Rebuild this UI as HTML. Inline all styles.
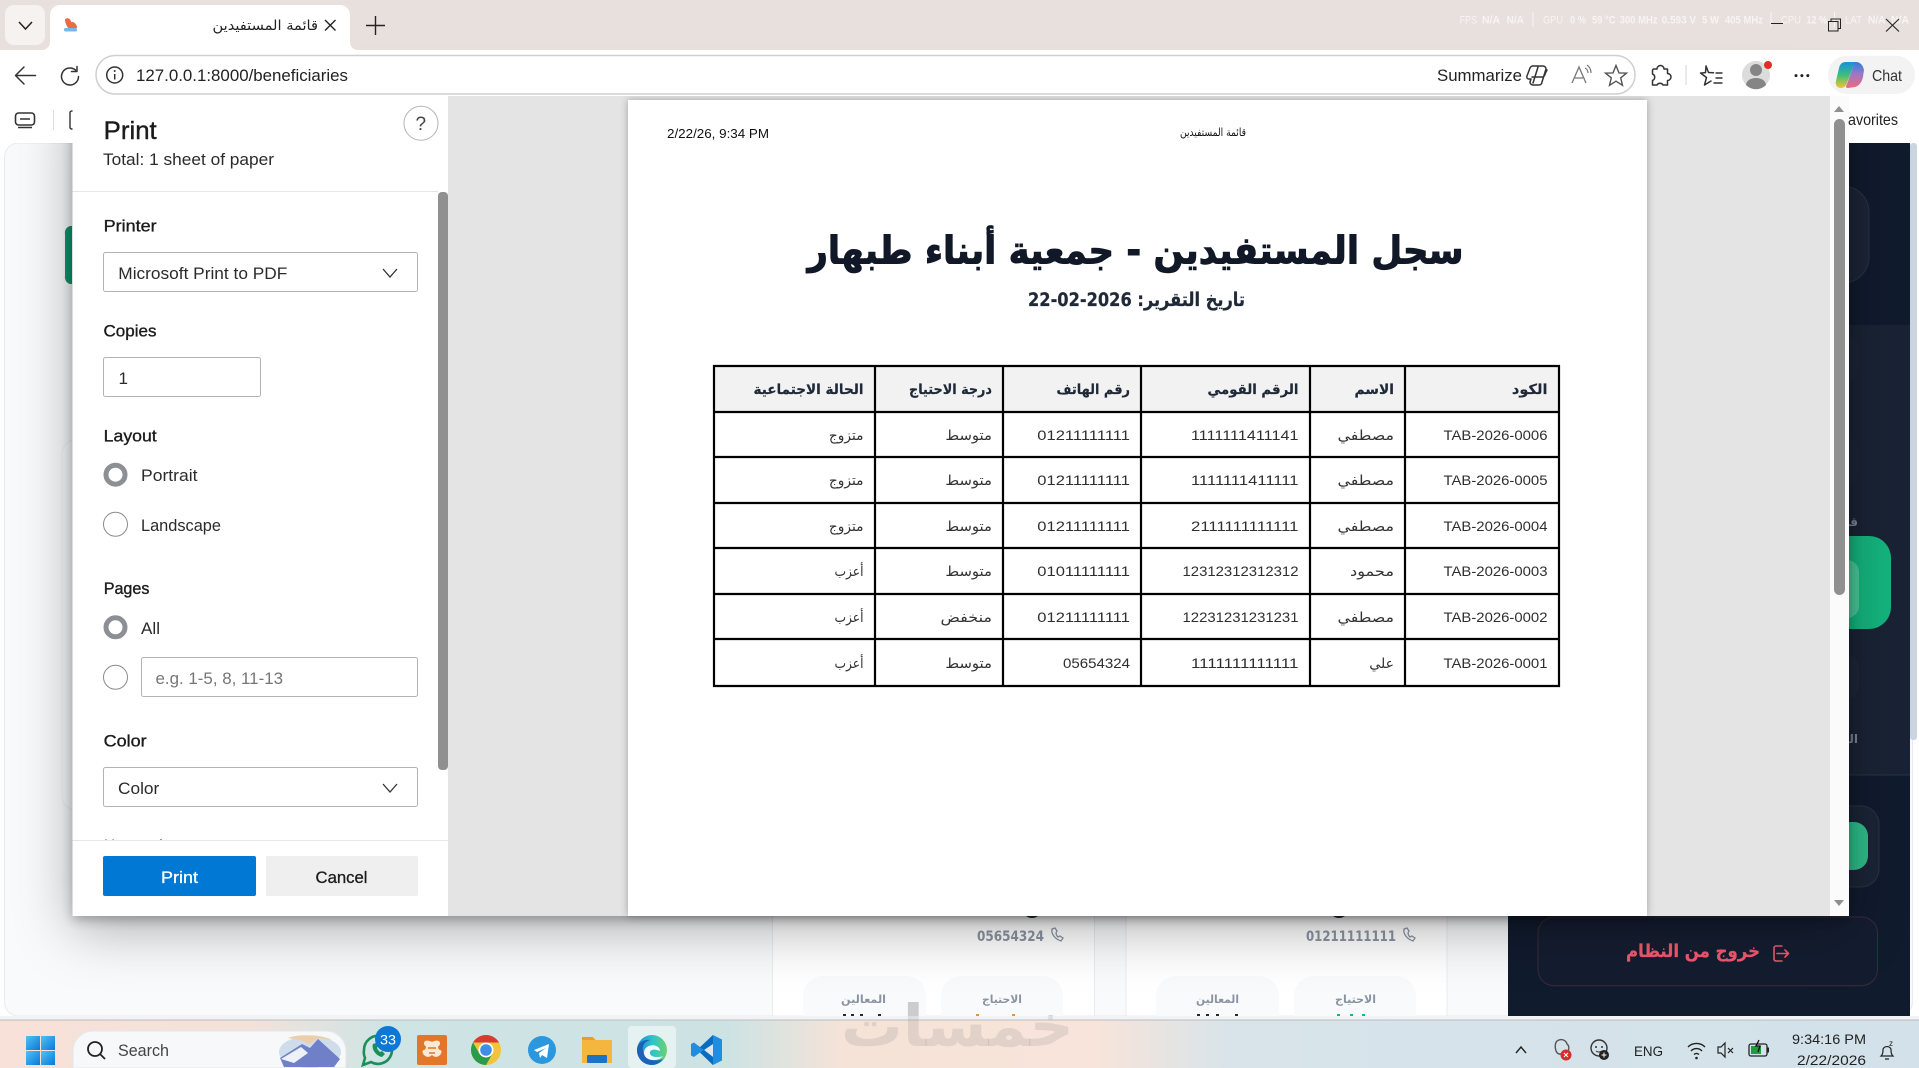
<!DOCTYPE html>
<html lang="en"><head><meta charset="utf-8"><title>قائمة المستفيدين</title>
<style>
html,body{margin:0;padding:0;width:1919px;height:1068px;overflow:hidden;background:#fff}
svg{display:block}
text{font-family:"Liberation Sans",sans-serif;fill:#222}
.ar{font-family:"DejaVu Sans",sans-serif;direction:rtl;text-anchor:start}
.lb{font-size:17px;fill:#1b1b1b;stroke:#1b1b1b;stroke-width:.35px}
.t{font-size:17px;fill:#2b2b2b}
.hw{font-size:11px;fill:#f7f4f2;font-weight:bold}
.td{font-size:14px;fill:#2f2f2f}
.th{font-size:14px;font-weight:bold;fill:#1f2937;stroke:#1f2937;stroke-width:.2px}
.bd{font-size:14px;fill:#333}
.ic{fill:none;stroke:#333;stroke-width:1.5;stroke-linecap:round;stroke-linejoin:round}
.ln{stroke:#000;stroke-width:2.2}
</style></head><body>
<svg xmlns="http://www.w3.org/2000/svg" width="1919" height="1068" viewBox="0 0 1919 1068">
<defs>
<linearGradient id="tb" x1="0" x2="1" y1="0" y2="0">
<stop offset="0" stop-color="#f8e1d9"/><stop offset=".13" stop-color="#f3e2da"/><stop offset=".2" stop-color="#cfe4e4"/><stop offset=".38" stop-color="#cde3e3"/><stop offset=".44" stop-color="#f6e3d8"/><stop offset=".57" stop-color="#f8e4da"/><stop offset=".64" stop-color="#d8e4ea"/><stop offset="1" stop-color="#d2e1ea"/>
</linearGradient>
<linearGradient id="cp1" x1="0" x2="0" y1="0" y2="1"><stop offset="0" stop-color="#1b8fe0"/><stop offset=".5" stop-color="#3cbf7a"/><stop offset="1" stop-color="#f4c430"/></linearGradient>
<linearGradient id="cp2" x1="0" x2="0" y1="0" y2="1"><stop offset="0" stop-color="#2b7fe0"/><stop offset=".45" stop-color="#9a78c8"/><stop offset="1" stop-color="#f36a7a"/></linearGradient>
<linearGradient id="eg" x1="0" x2="1" y1="0" y2="0"><stop offset="0" stop-color="#1b8fdc"/><stop offset=".55" stop-color="#30c5c8"/><stop offset="1" stop-color="#6cd36a"/></linearGradient>
<linearGradient id="win" x1="0" x2="1" y1="0" y2="1"><stop offset="0" stop-color="#4fc3f7"/><stop offset="1" stop-color="#0a78d4"/></linearGradient>
<clipPath id="more"><rect x="100" y="820" width="200" height="20"/></clipPath>
<clipPath id="cardclip"><rect x="770" y="916" width="700" height="100"/></clipPath>
<path id="star" d="M0-11L3-3.6 10.5-3.4 4.7 1.4 6.5 8.9 0 4.7-6.5 8.9-4.7 1.4-10.5-3.4-3-3.6Z"/>
</defs>

<!-- window chrome background -->
<rect width="1919" height="1068" fill="#fff"/>
<rect width="1919" height="50" fill="#e8e0dd"/>

<!-- page behind -->
<rect x="4.5" y="143" width="1908" height="873" rx="14" fill="#f8fafc" stroke="#e8ecf0"/>
<path d="M72 226h-2a7 7 0 0 0-5 8v42a7 7 0 0 0 5 8h2z" fill="#10946f"/>
<rect x="62" y="440" width="30" height="370" rx="14" fill="#fbfcfd" stroke="#eef1f4"/>

<!-- cards -->
<rect x="772.5" y="900" width="322" height="116" fill="#fff" stroke="#e8ecf0"/>
<rect x="1126" y="900" width="321" height="116" fill="#fff" stroke="#e8ecf0"/>
<g clip-path="url(#cardclip)">
<rect x="803" y="976" width="123" height="70" rx="20" fill="#f8fafc"/>
<rect x="941" y="976" width="122" height="70" rx="20" fill="#f8fafc"/>
<rect x="1156" y="976" width="123" height="70" rx="20" fill="#f8fafc"/>
<rect x="1294" y="976" width="122" height="70" rx="20" fill="#f8fafc"/>
<circle cx="1032" cy="908" r="10" fill="#1e293b"/>
<circle cx="1339" cy="908" r="10" fill="#1e293b"/>
</g>
<text x="1044" y="941" font-size="14" font-weight="bold" style="text-anchor:end;font-family:'DejaVu Sans',sans-serif;fill:#8a93a3" textLength="67" lengthAdjust="spacingAndGlyphs">05654324</text>
<text x="1396" y="941" font-size="14" font-weight="bold" style="text-anchor:end;font-family:'DejaVu Sans',sans-serif;fill:#8a93a3" textLength="90" lengthAdjust="spacingAndGlyphs">01211111111</text>
<path d="M1052 929c-1 5 3 10 9 12l2-3-3-2-2 1c-1-1-2-2-2-4l1-2-2-3z" fill="none" stroke="#8a93a3" stroke-width="1.3"/>
<path d="M1404 929c-1 5 3 10 9 12l2-3-3-2-2 1c-1-1-2-2-2-4l1-2-2-3z" fill="none" stroke="#8a93a3" stroke-width="1.3"/>
<text class="ar" x="886" y="1003" font-size="11" font-weight="bold" style="fill:#8b93a1" textLength="45" lengthAdjust="spacingAndGlyphs">المعالين</text>
<text class="ar" x="1022" y="1003" font-size="11" font-weight="bold" style="fill:#8b93a1" textLength="40" lengthAdjust="spacingAndGlyphs">الاحتياج</text>
<text class="ar" x="1239" y="1003" font-size="11" font-weight="bold" style="fill:#8b93a1" textLength="43" lengthAdjust="spacingAndGlyphs">المعالين</text>
<text class="ar" x="1376" y="1003" font-size="11" font-weight="bold" style="fill:#8b93a1" textLength="41" lengthAdjust="spacingAndGlyphs">الاحتياج</text>
<g fill="#1e293b"><rect x="843" y="1014" width="3" height="2"/><rect x="851" y="1014" width="3" height="2"/><rect x="860" y="1014" width="3" height="2"/><rect x="878" y="1014" width="3" height="2"/><rect x="1197" y="1014" width="3" height="2"/><rect x="1206" y="1014" width="3" height="2"/><rect x="1216" y="1014" width="3" height="2"/><rect x="1235" y="1014" width="3" height="2"/></g>
<g fill="#e8913a"><rect x="976" y="1014" width="3" height="2"/><rect x="1012" y="1014" width="3" height="2"/></g>
<g fill="#10b981"><rect x="1337" y="1014" width="3" height="2"/><rect x="1350" y="1014" width="3" height="2"/><rect x="1362" y="1014" width="3" height="2"/></g>

<!-- dark sidebar -->
<rect x="1508" y="143" width="402" height="873" fill="#111b2e"/>
<rect x="1508" y="325" width="402" height="450" fill="#1a2335"/>
<line x1="1508" x2="1910" y1="775" y2="775" stroke="#2a3346"/>
<rect x="1910" y="143" width="7" height="597" rx="3" fill="#cbd5e1"/>
<rect x="1780" y="186" width="89" height="97" rx="26" fill="#1c2537" stroke="#293245"/>
<rect x="1780" y="335" width="79" height="47" rx="14" fill="#1c2537"/>
<rect x="1780" y="437" width="79" height="47" rx="14" fill="#1c2537"/>
<text class="ar" x="1858" y="526" font-size="12" font-weight="bold" style="fill:#7e8694">قـ</text>
<rect x="1780" y="536" width="111" height="93" rx="22" fill="#14b57f"/>
<rect x="1780" y="560" width="79" height="58" rx="12" fill="#4cc79a"/>
<rect x="1780" y="654" width="79" height="45" rx="14" fill="#1e2739"/>
<text class="ar" x="1858" y="743" font-size="12" font-weight="bold" style="fill:#7e8694">الـ</text>
<rect x="1780" y="806" width="99" height="81" rx="18" fill="#1b2436" stroke="#2a3345"/>
<rect x="1780" y="822" width="88" height="48" rx="14" fill="#2fbd8a"/>
<rect x="1538" y="917" width="339.500" height="68.700" rx="16" fill="#141d30" stroke="#3f2a38"/>
<text class="ar" x="1760" y="957" font-size="18" font-weight="bold" style="fill:#f0596f;stroke:#f0596f;stroke-width:.3" textLength="134" lengthAdjust="spacingAndGlyphs">خروج من النظام</text>
<path d="M1782 946h-6a2 2 0 0 0-2 2v11a2 2 0 0 0 2 2h6M1777 953.500h11M1785 950l3.500 3.500-3.500 3.500" fill="none" stroke="#f0596f" stroke-width="1.600" stroke-linecap="round" stroke-linejoin="round"/>

<!-- watermark -->
<text class="ar" x="1074" y="1046" font-size="58" font-weight="bold" style="fill:#8c8c8c;fill-opacity:.26" textLength="233" lengthAdjust="spacingAndGlyphs">خمسات</text>

<!-- print dialog -->
<g style="filter:drop-shadow(0 4px 6px rgba(0,0,0,.28)) drop-shadow(0 12px 28px rgba(0,0,0,.3))"><rect x="72.500" y="96" width="1776.500" height="820" fill="#e4e4e4"/></g>
<rect x="72.500" y="96" width="375.500" height="820" fill="#fff"/>
<rect x="1830" y="96" width="19" height="820" fill="#fbfbfb"/>
<path d="M1834 112l5-6 5 6z" fill="#8f8f8f"/>
<path d="M1834 900l5 6 5-6z" fill="#8f8f8f"/>
<rect x="1834" y="119" width="11" height="476" rx="5.500" fill="#909090"/>
<rect x="438" y="192" width="10" height="578" rx="4" fill="#909090"/>

<g style="filter:drop-shadow(0 0 4px rgba(0,0,0,.3))"><rect x="628" y="100" width="1019" height="816" fill="#fff"/></g>

<!-- sidebar text -->
<text x="103.700" y="139" font-size="25" style="fill:#1b1b1b;stroke:#1b1b1b;stroke-width:.4" textLength="53" lengthAdjust="spacingAndGlyphs">Print</text>
<text x="103" y="165" class="t" textLength="171" lengthAdjust="spacingAndGlyphs">Total: 1 sheet of paper</text>
<circle cx="421" cy="123.300" r="17" fill="#fff" stroke="#b5b5b5"/>
<text x="415.500" y="130" font-size="19" style="fill:#444">?</text>
<line x1="72.500" x2="438" y1="191.500" y2="191.500" stroke="#e6e6e6"/>

<text x="103.700" y="231.500" class="lb" textLength="53" lengthAdjust="spacingAndGlyphs">Printer</text>
<rect x="103.500" y="252.500" width="314" height="39" rx="2" fill="#fff" stroke="#b3b3b3"/>
<text x="118.300" y="279" class="t" textLength="169" lengthAdjust="spacingAndGlyphs">Microsoft Print to PDF</text>
<path d="M383 269l7 8 7-8" fill="none" stroke="#333" stroke-width="1.300"/>

<text x="103.500" y="336.700" class="lb" textLength="53" lengthAdjust="spacingAndGlyphs">Copies</text>
<rect x="103.500" y="357.500" width="157" height="39" rx="2" fill="#fff" stroke="#b3b3b3"/>
<text x="118.500" y="384" class="t">1</text>

<text x="103.700" y="441.700" class="lb" textLength="53" lengthAdjust="spacingAndGlyphs">Layout</text>
<circle cx="115.500" cy="474.700" r="9.500" fill="#fff" stroke="#8c8f93" stroke-width="5"/>
<text x="141" y="481" class="t" textLength="56.500" lengthAdjust="spacingAndGlyphs">Portrait</text>
<circle cx="115.500" cy="524.300" r="12" fill="#fff" stroke="#8a8a8a"/>
<text x="141" y="531" class="t" textLength="80" lengthAdjust="spacingAndGlyphs">Landscape</text>

<text x="103.700" y="594" class="lb" textLength="45.700" lengthAdjust="spacingAndGlyphs">Pages</text>
<circle cx="115.500" cy="627.300" r="9.500" fill="#fff" stroke="#8c8f93" stroke-width="5"/>
<text x="141" y="634" class="t" textLength="19" lengthAdjust="spacingAndGlyphs">All</text>
<circle cx="115.500" cy="677.300" r="12" fill="#fff" stroke="#8a8a8a"/>
<rect x="141.500" y="657.500" width="276" height="39" rx="2" fill="#fff" stroke="#b3b3b3"/>
<text x="155.500" y="684" font-size="17" style="fill:#767676" textLength="127.500" lengthAdjust="spacingAndGlyphs">e.g. 1-5, 8, 11-13</text>

<text x="103.600" y="746.700" class="lb" textLength="43" lengthAdjust="spacingAndGlyphs">Color</text>
<rect x="103.500" y="767.500" width="314" height="39" rx="2" fill="#fff" stroke="#b3b3b3"/>
<text x="118" y="794" class="t" textLength="41.300" lengthAdjust="spacingAndGlyphs">Color</text>
<path d="M383 784l7 8 7-8" fill="none" stroke="#333" stroke-width="1.300"/>

<g clip-path="url(#more)"><text x="104" y="851" font-size="17" style="fill:#0067b8" textLength="80" lengthAdjust="spacingAndGlyphs">More settings</text></g>
<line x1="72.500" x2="448" y1="840.500" y2="840.500" stroke="#e6e6e6"/>
<rect x="103" y="856" width="153" height="40" rx="2" fill="#0078d4"/>
<text x="161" y="883" font-size="17" style="fill:#fff;stroke:#fff;stroke-width:.3" textLength="37" lengthAdjust="spacingAndGlyphs">Print</text>
<rect x="266" y="856" width="152" height="40" rx="2" fill="#efefef"/>
<text x="315.500" y="883" font-size="17" style="fill:#1b1b1b;stroke:#1b1b1b;stroke-width:.3" textLength="52" lengthAdjust="spacingAndGlyphs">Cancel</text>

<!-- page preview -->
<text x="667" y="138" font-size="13" style="fill:#111" textLength="102" lengthAdjust="spacingAndGlyphs">2/22/26, 9:34 PM</text>
<text class="ar" x="1246" y="136" font-size="11" style="fill:#111" textLength="66" lengthAdjust="spacingAndGlyphs">قائمة المستفيدين</text>
<text class="ar" x="1463.500" y="263.500" font-size="38" font-weight="bold" style="fill:#111827;stroke:#111827;stroke-width:1" textLength="656" lengthAdjust="spacingAndGlyphs">سجل المستفيدين - جمعية أبناء طبهار</text>
<text class="ar" x="1245" y="306" font-size="19" font-weight="bold" style="fill:#1f2937;stroke:#1f2937;stroke-width:.25" textLength="217" lengthAdjust="spacingAndGlyphs">تاريخ التقرير: 2026-02-22</text>

<!-- table -->
<rect x="714" y="366" width="845" height="46" fill="#f2f2f2"/>
<g class="ln">
<line x1="713" x2="1560" y1="366" y2="366"/><line x1="713" x2="1560" y1="412" y2="412"/><line x1="713" x2="1560" y1="457" y2="457"/><line x1="713" x2="1560" y1="503" y2="503"/><line x1="713" x2="1560" y1="548" y2="548"/><line x1="713" x2="1560" y1="594" y2="594"/><line x1="713" x2="1560" y1="639" y2="639"/><line x1="713" x2="1560" y1="686" y2="686"/>
<line x1="714" x2="714" y1="365" y2="687"/><line x1="875" x2="875" y1="365" y2="687"/><line x1="1003" x2="1003" y1="365" y2="687"/><line x1="1141" x2="1141" y1="365" y2="687"/><line x1="1310" x2="1310" y1="365" y2="687"/><line x1="1405" x2="1405" y1="365" y2="687"/><line x1="1559" x2="1559" y1="365" y2="687"/>
</g>
<text class="ar th" x="1547.500" y="394" textLength="35.600" lengthAdjust="spacingAndGlyphs">الكود</text>
<text class="ar th" x="1394" y="394" textLength="39.500" lengthAdjust="spacingAndGlyphs">الاسم</text>
<text class="ar th" x="1298.500" y="394" textLength="91" lengthAdjust="spacingAndGlyphs">الرقم القومي</text>
<text class="ar th" x="1130" y="394" textLength="73.500" lengthAdjust="spacingAndGlyphs">رقم الهاتف</text>
<text class="ar th" x="992" y="394" textLength="83" lengthAdjust="spacingAndGlyphs">درجة الاحتياج</text>
<text class="ar th" x="863.500" y="394" textLength="110" lengthAdjust="spacingAndGlyphs">الحالة الاجتماعية</text>

<text class="td" x="1443.500" y="440" textLength="104" lengthAdjust="spacingAndGlyphs">TAB-2026-0006</text>
<text class="ar bd" x="1394" y="440" textLength="56.500" lengthAdjust="spacingAndGlyphs">مصطفي</text>
<text class="td" x="1191" y="440" textLength="107.500" lengthAdjust="spacingAndGlyphs">1111111411141</text>
<text class="td" x="1037.300" y="440" textLength="92.700" lengthAdjust="spacingAndGlyphs">01211111111</text>
<text class="ar bd" x="992" y="440" textLength="46.600" lengthAdjust="spacingAndGlyphs">متوسط</text>
<text class="ar bd" x="863.500" y="440" textLength="34.600" lengthAdjust="spacingAndGlyphs">متزوج</text>

<text class="td" x="1443.500" y="485" textLength="104" lengthAdjust="spacingAndGlyphs">TAB-2026-0005</text>
<text class="ar bd" x="1394" y="485" textLength="56.500" lengthAdjust="spacingAndGlyphs">مصطفي</text>
<text class="td" x="1191" y="485" textLength="107.500" lengthAdjust="spacingAndGlyphs">1111111411111</text>
<text class="td" x="1037.300" y="485" textLength="92.700" lengthAdjust="spacingAndGlyphs">01211111111</text>
<text class="ar bd" x="992" y="485" textLength="46.600" lengthAdjust="spacingAndGlyphs">متوسط</text>
<text class="ar bd" x="863.500" y="485" textLength="34.600" lengthAdjust="spacingAndGlyphs">متزوج</text>

<text class="td" x="1443.500" y="531" textLength="104" lengthAdjust="spacingAndGlyphs">TAB-2026-0004</text>
<text class="ar bd" x="1394" y="531" textLength="56.500" lengthAdjust="spacingAndGlyphs">مصطفي</text>
<text class="td" x="1191" y="531" textLength="107.500" lengthAdjust="spacingAndGlyphs">2111111111111</text>
<text class="td" x="1037.300" y="531" textLength="92.700" lengthAdjust="spacingAndGlyphs">01211111111</text>
<text class="ar bd" x="992" y="531" textLength="46.600" lengthAdjust="spacingAndGlyphs">متوسط</text>
<text class="ar bd" x="863.500" y="531" textLength="34.600" lengthAdjust="spacingAndGlyphs">متزوج</text>

<text class="td" x="1443.500" y="576" textLength="104" lengthAdjust="spacingAndGlyphs">TAB-2026-0003</text>
<text class="ar bd" x="1394" y="576" textLength="44" lengthAdjust="spacingAndGlyphs">محمود</text>
<text class="td" x="1182.500" y="576" textLength="116" lengthAdjust="spacingAndGlyphs">12312312312312</text>
<text class="td" x="1037.300" y="576" textLength="92.700" lengthAdjust="spacingAndGlyphs">01011111111</text>
<text class="ar bd" x="992" y="576" textLength="46.600" lengthAdjust="spacingAndGlyphs">متوسط</text>
<text class="ar bd" x="863.500" y="576" textLength="29" lengthAdjust="spacingAndGlyphs">أعزب</text>

<text class="td" x="1443.500" y="622" textLength="104" lengthAdjust="spacingAndGlyphs">TAB-2026-0002</text>
<text class="ar bd" x="1394" y="622" textLength="56.500" lengthAdjust="spacingAndGlyphs">مصطفي</text>
<text class="td" x="1182.500" y="622" textLength="116" lengthAdjust="spacingAndGlyphs">12231231231231</text>
<text class="td" x="1037.300" y="622" textLength="92.700" lengthAdjust="spacingAndGlyphs">01211111111</text>
<text class="ar bd" x="992" y="622" textLength="51.500" lengthAdjust="spacingAndGlyphs">منخفض</text>
<text class="ar bd" x="863.500" y="622" textLength="29" lengthAdjust="spacingAndGlyphs">أعزب</text>

<text class="td" x="1443.500" y="668" textLength="104" lengthAdjust="spacingAndGlyphs">TAB-2026-0001</text>
<text class="ar bd" x="1394" y="668" textLength="24.700" lengthAdjust="spacingAndGlyphs">علي</text>
<text class="td" x="1191" y="668" textLength="107.500" lengthAdjust="spacingAndGlyphs">1111111111111</text>
<text class="td" x="1063" y="668" textLength="67" lengthAdjust="spacingAndGlyphs">05654324</text>
<text class="ar bd" x="992" y="668" textLength="46.600" lengthAdjust="spacingAndGlyphs">متوسط</text>
<text class="ar bd" x="863.500" y="668" textLength="29" lengthAdjust="spacingAndGlyphs">أعزب</text>

<!-- toolbar -->
<rect y="50" width="1919" height="46" fill="#fff"/>
<rect x="0" y="96" width="72.500" height="47" fill="#fff"/>
<rect x="1849" y="96" width="70" height="47" fill="#fff"/>
<rect x="96" y="55.500" width="1539" height="38.500" rx="19" fill="#fff" stroke="#cfcfcf" stroke-width="1.500"/>

<!-- tabs -->
<rect x="5" y="5" width="40" height="40" rx="9" fill="#f5f2ef"/>
<path d="M19 22l6.500 7 6.500-7" fill="none" stroke="#222" stroke-width="1.500"/>
<path d="M42 50a8 8 0 0 0 8-8V15a10 10 0 0 1 10-10h280a10 10 0 0 1 10 10v27a8 8 0 0 0 8 8z" fill="#fff"/>
<path d="M65 19c3-2 6 0 6 3 3-1 6 3 6 5 0 2-5 3-8 2-2-2-4-6-4-10z" fill="#ea6c45"/>
<rect x="64" y="28" width="13" height="3.500" rx="1.500" fill="#79b6ea"/>
<text class="ar" x="318" y="30" font-size="14" style="fill:#222" textLength="105.500" lengthAdjust="spacingAndGlyphs">قائمة المستفيدين</text>
<path d="M325 20l10.500 10.500M335.500 20L325 30.500" stroke="#222" stroke-width="1.400"/>
<path d="M375.500 16v19M366 25.500h19" stroke="#222" stroke-width="1.400"/>

<!-- title bar overlay -->
<text class="hw" x="1459.600" y="23.500" textLength="17.500" lengthAdjust="spacingAndGlyphs" style="font-weight:normal">FPS</text>
<text class="hw" x="1482" y="23.500" textLength="18" lengthAdjust="spacingAndGlyphs">N/A</text>
<text class="hw" x="1506.500" y="23.500" textLength="17.500" lengthAdjust="spacingAndGlyphs">N/A</text>
<rect x="1532.500" y="12" width="1" height="15" fill="#f7f4f2"/>
<text class="hw" x="1543" y="23.500" textLength="20" lengthAdjust="spacingAndGlyphs" style="font-weight:normal">GPU</text>
<text class="hw" x="1570" y="23.500" textLength="16" lengthAdjust="spacingAndGlyphs">0 %</text>
<text class="hw" x="1592" y="23.500" textLength="23.500" lengthAdjust="spacingAndGlyphs">59 °C</text>
<text class="hw" x="1619.600" y="23.500" textLength="38" lengthAdjust="spacingAndGlyphs">300 MHz</text>
<text class="hw" x="1661.600" y="23.500" textLength="34.500" lengthAdjust="spacingAndGlyphs">0.593 V</text>
<text class="hw" x="1702" y="23.500" textLength="17" lengthAdjust="spacingAndGlyphs">5 W</text>
<text class="hw" x="1725" y="23.500" textLength="38" lengthAdjust="spacingAndGlyphs">405 MHz</text>
<rect x="1770.500" y="12" width="1" height="15" fill="#f7f4f2"/>
<text class="hw" x="1781" y="23.500" textLength="20" lengthAdjust="spacingAndGlyphs" style="font-weight:normal">CPU</text>
<text class="hw" x="1806.500" y="23.500" textLength="20.500" lengthAdjust="spacingAndGlyphs">12 %</text>
<rect x="1834" y="12" width="1" height="15" fill="#f7f4f2"/>
<text class="hw" x="1845" y="23.500" textLength="17" lengthAdjust="spacingAndGlyphs" style="font-weight:normal">LAT</text>
<text class="hw" x="1868" y="23.500" textLength="17.500" lengthAdjust="spacingAndGlyphs">N/A</text>
<text class="hw" x="1891" y="23.500" textLength="18" lengthAdjust="spacingAndGlyphs">N/A</text>
<path d="M1771 23.500h12" stroke="#222" stroke-width="1"/>
<path d="M1831 21.500v-2.500h9.500v9.500h-2.500M1828.500 21.500h9.500v9.500h-9.500z" fill="none" stroke="#222" stroke-width="1"/>
<path d="M1886 19l13 12.500M1899 19l-13 12.500" stroke="#222" stroke-width="1.100"/>

<!-- toolbar icons -->
<path class="ic" d="M35.500 75.500H16M24 67l-8.500 8.500L24 84"/>
<path class="ic" d="M75.500 70a8.500 8.500 0 1 0 3 6.500M77 66.500v5h-5.500"/>
<circle class="ic" cx="114.700" cy="75" r="8"/><path d="M114.700 74v5.500" stroke="#333" stroke-width="1.500"/><circle cx="114.700" cy="71" r="1" fill="#333"/>
<text x="136" y="81" font-size="17" style="fill:#222" textLength="212" lengthAdjust="spacingAndGlyphs">127.0.0.1:8000/beneficiaries</text>
<text x="1437" y="81" font-size="17" style="fill:#222" textLength="85" lengthAdjust="spacingAndGlyphs">Summarize</text>
<path class="ic" d="M1534 66h9a3 3 0 0 1 3 3l-4 13a3 3 0 0 1-3 3h-6a3 3 0 0 1-3-3l1-3h-2a2 2 0 0 1-2-3l3-8a3.500 3.500 0 0 1 4-2zM1538 67l-5 16M1532 77h10a3 3 0 0 0 3-3l2-4"/>
<path d="M1572 83l7-16 7 16M1575 78h8" fill="none" stroke="#777" stroke-width="1.300"/>
<path d="M1585 68c2 1 3 3 3 5M1587 65c3 2 4 5 4 8" fill="none" stroke="#777" stroke-width="1.200"/>
<use href="#star" x="1616" y="76.500" fill="none" stroke="#555" stroke-width="1.400"/>
<path class="ic" transform="translate(-3.500 0)" d="M1657 69h3.500a3.500 3.500 0 0 1 7 0h3.500v4.500a3.500 3.500 0 0 1 0 7V85h-4.500a3.500 3.500 0 0 0-6 0H1656v-4.500a3.500 3.500 0 0 0 0-6.500V71a2 2 0 0 1 1-2z"/>
<line x1="1686" x2="1686" y1="65" y2="85" stroke="#d4d4d4"/>
<g transform="translate(-2.500 0)"><path class="ic" d="M1708.500 66l2.500 6.500 5 .3M1703 73l6 4.500-2 7.500 6.500-4M1704 73l4-.4 .5-6.600"/><path d="M1718 73h7M1718 78h7M1716 83h9" fill="none" stroke="#333" stroke-width="1.500"/></g>
<ellipse cx="1756" cy="75" rx="14" ry="14" fill="#dcdcdc"/>
<circle cx="1756" cy="70" r="6" fill="#858585"/><path d="M1746 85a10 7 0 0 1 20 0 14 14 0 0 1-20 0z" fill="#858585"/>
<circle cx="1768" cy="65" r="4" fill="#e02f20"/>
<circle cx="1796" cy="75.600" r="1.500" fill="#222"/><circle cx="1801.900" cy="75.600" r="1.500" fill="#222"/><circle cx="1807.800" cy="75.600" r="1.500" fill="#222"/>
<rect x="1828" y="55.700" width="87" height="38.300" rx="19" fill="#f3f3f3"/>
<path d="M1846 62h6c3 0 2 2 1 5l-6 16c-1 3-3 5-6 5-4 0-6-3-5-7l3-13c1-4 3-6 7-6z" fill="url(#cp1)"/>
<path d="M1852 62h4c4 0 7 3 8 8l-1 7c-1 5-4 9-8 10l-7 1c-3 0-2-2-1-4l6-17c1-3 1-5-1-5z" fill="url(#cp2)"/>
<text x="1872" y="81" font-size="16" style="fill:#333" textLength="30" lengthAdjust="spacingAndGlyphs">Chat</text>

<!-- bookmarks bar -->
<rect x="15.500" y="113" width="19" height="12" rx="3" fill="none" stroke="#333" stroke-width="1.600"/><path d="M20 119h10M18 127.500h14" stroke="#333" stroke-width="1.600"/>
<line x1="53.500" x2="53.500" y1="110" y2="130" stroke="#ddd"/>
<path d="M72.500 111h-1a2 2 0 0 0-1.500 2v14a2 2 0 0 0 1.500 2h1" fill="none" stroke="#333" stroke-width="1.400"/>
<text x="1848" y="125" font-size="16" style="fill:#222" textLength="50" lengthAdjust="spacingAndGlyphs">avorites</text>

<!-- taskbar -->
<rect y="1016" width="1919" height="4" fill="#f2f3f4"/>
<rect y="1019.500" width="1919" height="1" fill="#b9bcbf"/>
<rect y="1020.500" width="1919" height="47.500" fill="url(#tb)"/>
<text class="ar" x="1074" y="1046" font-size="58" font-weight="bold" style="fill:#8c8c8c;fill-opacity:.2" textLength="233" lengthAdjust="spacingAndGlyphs">خمسات</text>
<g fill="url(#win)"><rect x="26" y="1036" width="14" height="14"/><rect x="41" y="1036" width="14" height="14"/><rect x="26" y="1051" width="14" height="14"/><rect x="41" y="1051" width="14" height="14"/></g>
<path d="M73 1068v-17a20 20 0 0 1 20-20h233a20 20 0 0 1 20 20v17z" fill="#f6f8f9" stroke="#e4e7e9"/>
<circle cx="95" cy="1049" r="7" fill="none" stroke="#222" stroke-width="1.800"/><path d="M100 1054l5 5" stroke="#222" stroke-width="1.800"/>
<text x="118" y="1056" font-size="17" style="fill:#444" textLength="51" lengthAdjust="spacingAndGlyphs">Search</text>
<ellipse cx="310" cy="1052" rx="31" ry="16" fill="#cfdcea"/>
<path d="M280 1058l22-14 8 4 8-9 22 20-6 8h-50z" fill="#6f7fc8"/><path d="M281 1059l20-12 7 6-14 10z" fill="#eef2f6"/><path d="M288 1038c8-4 34-4 44 2l-14-2-8 6-10-4z" fill="#eccfa8"/>
<!-- whatsapp -->
<path d="M364 1050a14 14 0 1 1 7 12l-8 3 2-7a14 14 0 0 1-1-8z" fill="none" stroke="#1b8f5a" stroke-width="2.600"/>
<path d="M373 1044c-2 5 3 12 9 13l3-3-3-3-2 1c-1-1-2-2-3-4l1-2-2-3z" fill="#1b8f5a"/>
<circle cx="388" cy="1039" r="13" fill="#0a78d4"/>
<text x="380" y="1044.500" font-size="14" style="fill:#fff" textLength="16" lengthAdjust="spacingAndGlyphs">33</text>
<!-- xampp -->
<rect x="417" y="1035" width="30" height="30" rx="2" fill="#e2762b"/>
<path d="M424 1043c0-3 5-3 8-1 3-2 8-2 8 1s-2 3-2 4 1 3 2 3c2 0 2 3 0 5-2 2-5 3-8 0-3 3-6 2-8 0-2-2-2-5 0-5 1 0 2-2 2-3s-2-1-2-4z" fill="#fde8d4"/><path d="M428 1048h8M429 1053h6" stroke="#e2762b" stroke-width="1.600"/>
<!-- chrome -->
<circle cx="486" cy="1050" r="15" fill="#f3c33c"/>
<path d="M473 1042.500a15 15 0 0 1 26 0h-13z" fill="#d93b30"/>
<path d="M473 1042.500a15 15 0 0 0 13 22.500l6.500-11.300h-13z" fill="#2c9a4b"/>
<circle cx="486" cy="1050" r="7.500" fill="#fff"/><circle cx="486" cy="1050" r="5.800" fill="#3f8ee5"/>
<!-- telegram -->
<circle cx="542" cy="1050" r="14" fill="#2a97de"/><path d="M534 1050l15-6-2 14-5-3-2 3-1-5 7-5-9 4z" fill="#fff"/>
<!-- folder -->
<path d="M582 1039a2 2 0 0 1 2-2h9l3 3h16v23h-30z" fill="#f4b63f"/><path d="M582 1037h10l3 3h-13z" fill="#e89c2a"/><rect x="587" y="1055" width="20" height="8" rx="1" fill="#1a73c9"/>
<!-- edge -->
<rect x="628" y="1026" width="48" height="42" rx="4" fill="#fff" fill-opacity=".5"/>
<circle cx="652" cy="1050" r="15" fill="url(#eg)"/>
<path d="M637 1050c0-7 7-11 13-10-6 2-8 6-7 11 1 7 9 12 20 8-3 4-7 6-11 6-9 0-15-7-15-15z" fill="#1e62b8"/>
<path d="M644 1053c0-7 8-9 12-7 3 1 4 3 4 5-4-2-9-2-10 1-1 3 3 5 6 5 3 0 5 0 7-1-2 3-6 4-10 4-5 0-9-3-9-7z" fill="#fff" fill-opacity=".92"/>
<!-- vscode -->
<path d="M713 1035l9 4.500v21l-9 4.500-13-12.500-6 4.500-3-1.500v-11.500l3-1.500 6 4.500z" fill="#1f8ee0"/><path d="M713 1043l-9 7 9 7z" fill="#dbe7ee"/><path d="M713 1035v9l-9 6-4-2.500z M713 1065v-8l-9-7-4 2.500z" fill="#0a6cc0"/>

<!-- tray -->
<path d="M1516 1053l5-6 5 6" fill="none" stroke="#222" stroke-width="1.400"/>
<path d="M1557 1041c4-3 9-1 10 3 3 2 2 8-1 10h-7c-4-1-5-10-2-13z" fill="none" stroke="#555" stroke-width="1.400"/><circle cx="1566" cy="1055" r="5.500" fill="#d92b2b"/><path d="M1564 1053l4 4m0-4l-4 4" stroke="#fff"/>
<circle cx="1599" cy="1048" r="8" fill="none" stroke="#333" stroke-width="1.400"/><circle cx="1596" cy="1047" r="1" fill="#333"/><circle cx="1602" cy="1047" r="1" fill="#333"/><path d="M1596 1051q3 2 6 0" fill="none" stroke="#333"/><circle cx="1604" cy="1055" r="5" fill="#222"/><path d="M1604 1052.500v5m-2.500-2.500h5" stroke="#fff"/>
<text x="1634" y="1056" font-size="14" style="fill:#222" textLength="29" lengthAdjust="spacingAndGlyphs">ENG</text>
<path d="M1688 1047a12 12 0 0 1 17 0M1691 1051a7.500 7.500 0 0 1 11 0M1694 1054.500a3.500 3.500 0 0 1 5 0" fill="none" stroke="#222" stroke-width="1.400"/><circle cx="1696.500" cy="1058" r="1.300" fill="#222"/>
<path d="M1718 1047h3l4-4v14l-4-4h-3zM1728 1048l5 5m0-5l-5 5" fill="none" stroke="#222" stroke-width="1.200"/>
<rect x="1749" y="1044" width="18" height="12" rx="2" fill="none" stroke="#222" stroke-width="1.300"/><rect x="1751" y="1046" width="10" height="8" fill="#1f9d3a"/><rect x="1767" y="1047.500" width="2" height="5" fill="#222"/><path d="M1759 1040l-3 6h4l-2 6" fill="none" stroke="#111" stroke-width="1.300"/>
<text x="1792" y="1044" font-size="14" style="fill:#222" textLength="74" lengthAdjust="spacingAndGlyphs">9:34:16 PM</text>
<text x="1797" y="1065" font-size="14" style="fill:#222" textLength="69" lengthAdjust="spacingAndGlyphs">2/22/2026</text>
<path d="M1881 1056c2-2 2-4 2-7a4.500 4.500 0 0 1 8 0c0 3 0 5 2 7zM1885 1059h4" fill="none" stroke="#222" stroke-width="1.200"/><text x="1889" y="1046" font-size="8" style="fill:#222">z</text>
</svg>
</body></html>
